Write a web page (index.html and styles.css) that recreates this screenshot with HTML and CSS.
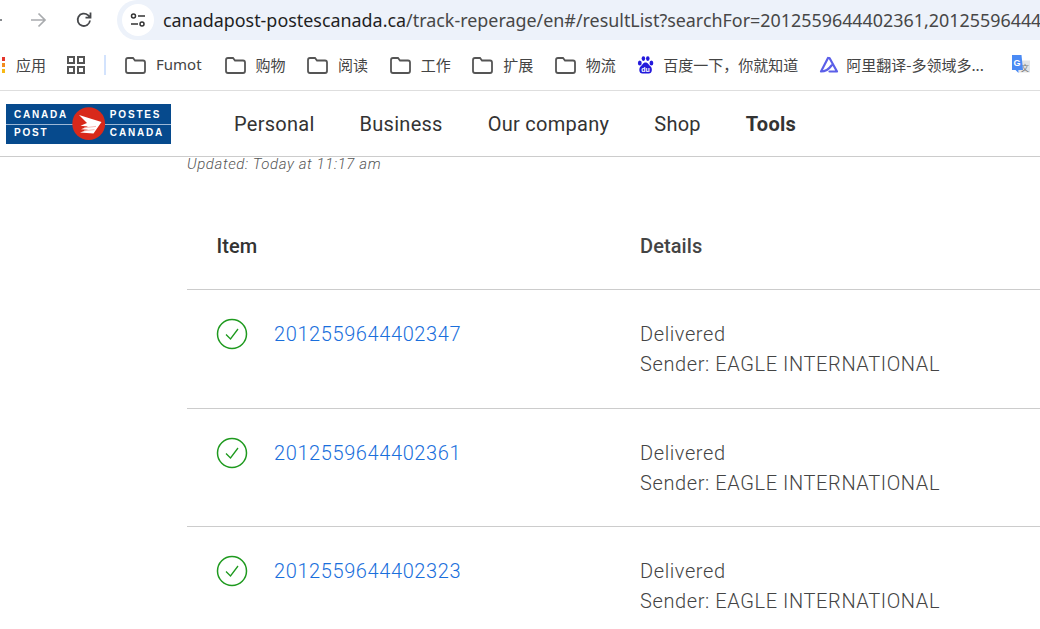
FILE: index.html
```html
<!DOCTYPE html>
<html lang="en">
<head>
    <meta charset="UTF-8">
    <meta name="viewport" content="width=device-width, initial-scale=1.0">
    <title>Canada Post - Track</title>
    <link rel="stylesheet" href="styles.css">
</head>
<body>
    <div class="toolbar">
        <div class="nav-btns">
            <svg class="back" width="8" height="20" viewBox="0 0 8 20"><path d="M-6 10H2" fill="none" stroke="#5f6368" stroke-width="1.6"/></svg>
            <svg class="forward" width="20" height="20" viewBox="0 0 20 20"><path d="M3 10H17M10.5 3.5L17 10L10.5 16.5" fill="none" stroke="#a9abae" stroke-width="1.7"/></svg>
            <svg class="reload" width="20" height="20" viewBox="0 0 20 20"><path d="M16 10.5A6.2 6.2 0 1 1 14 5.2L16.3 7.4M16.5 2.6V7.6H11.5" fill="none" stroke="#46484b" stroke-width="1.8"/></svg>
        </div>
        <div class="address">
            <span class="site-btn">
                <svg width="16" height="14" viewBox="0 0 16 14"><circle cx="3.5" cy="3" r="2" fill="none" stroke="#333" stroke-width="1.5"/><path d="M8 3H15M1 11H8" stroke="#333" stroke-width="1.5"/><circle cx="12" cy="11" r="2" fill="none" stroke="#333" stroke-width="1.5"/></svg>
            </span>
            <span class="url">canadapost-postescanada.ca<span class="url-rest">/track-reperage/en#/resultList?searchFor=2012559644402361,20125596444023</span></span>
        </div>
    </div>

    <div class="bookmarks">
        <span class="apps-dots"><i class="red"></i><i class="orange"></i><i class="yellow"></i></span>
        <span class="bm-label apps-label">应用</span>
        <svg class="grid-icon" width="18" height="18" viewBox="0 0 18 18"><g fill="none" stroke="#555" stroke-width="2"><rect x="1" y="1" width="6" height="6"/><rect x="11" y="1" width="6" height="6"/><rect x="1" y="11" width="6" height="6"/><rect x="11" y="11" width="6" height="6"/></g></svg>
        <span class="bm-sep"></span>
        <span class="bm bm-fumot"><svg class="folder" width="21" height="17" viewBox="0 0 21 17"><path d="M1 3.2Q1 1 3 1H8L10 3.5H18Q20 3.5 20 5.5V14Q20 16 18 16H3Q1 16 1 14Z" fill="none" stroke="#555" stroke-width="1.8"/></svg><span class="bm-label">Fumot</span></span>
        <span class="bm"><svg class="folder" width="21" height="17" viewBox="0 0 21 17"><path d="M1 3.2Q1 1 3 1H8L10 3.5H18Q20 3.5 20 5.5V14Q20 16 18 16H3Q1 16 1 14Z" fill="none" stroke="#555" stroke-width="1.8"/></svg><span class="bm-label">购物</span></span>
        <span class="bm"><svg class="folder" width="21" height="17" viewBox="0 0 21 17"><path d="M1 3.2Q1 1 3 1H8L10 3.5H18Q20 3.5 20 5.5V14Q20 16 18 16H3Q1 16 1 14Z" fill="none" stroke="#555" stroke-width="1.8"/></svg><span class="bm-label">阅读</span></span>
        <span class="bm"><svg class="folder" width="21" height="17" viewBox="0 0 21 17"><path d="M1 3.2Q1 1 3 1H8L10 3.5H18Q20 3.5 20 5.5V14Q20 16 18 16H3Q1 16 1 14Z" fill="none" stroke="#555" stroke-width="1.8"/></svg><span class="bm-label">工作</span></span>
        <span class="bm"><svg class="folder" width="21" height="17" viewBox="0 0 21 17"><path d="M1 3.2Q1 1 3 1H8L10 3.5H18Q20 3.5 20 5.5V14Q20 16 18 16H3Q1 16 1 14Z" fill="none" stroke="#555" stroke-width="1.8"/></svg><span class="bm-label">扩展</span></span>
        <span class="bm"><svg class="folder" width="21" height="17" viewBox="0 0 21 17"><path d="M1 3.2Q1 1 3 1H8L10 3.5H18Q20 3.5 20 5.5V14Q20 16 18 16H3Q1 16 1 14Z" fill="none" stroke="#555" stroke-width="1.8"/></svg><span class="bm-label">物流</span></span>
        <span class="bm bm-baidu"><svg width="17" height="18" viewBox="0 0 17 18"><g fill="#2319dc"><ellipse cx="2.8" cy="7" rx="1.9" ry="2.5"/><ellipse cx="6.4" cy="2.6" rx="1.8" ry="2.4"/><ellipse cx="10.8" cy="2.6" rx="1.8" ry="2.4"/><ellipse cx="14.4" cy="7" rx="1.9" ry="2.5"/><path d="M8.5 6.5C6 6.5 5.5 9 3.8 10.2C1.6 11.8 1.6 17.5 5.5 17.5H11.7C15.6 17.5 15.6 11.8 13.4 10.2C11.7 9 11 6.5 8.5 6.5Z"/></g><text x="8.6" y="15.6" class="du">du</text></svg><span class="bm-label">百度一下，你就知道</span></span>
        <span class="bm bm-ali"><svg width="20" height="18" viewBox="0 0 20 18"><path d="M9 2L2 15.5C6.5 15.5 10 13 12.5 9.5M9 2H10.5L18 15.5H10.5" fill="none" stroke="#5b5fe8" stroke-width="2.2" stroke-linejoin="round" stroke-linecap="round"/></svg><span class="bm-label">阿里翻译-多领域多...</span></span>
        <span class="bm-google"><svg width="19" height="20" viewBox="0 0 19 20"><rect x="8" y="5.5" width="11" height="12" fill="#e3e4e6"/><text x="10" y="15.5" class="wen">文</text><path d="M1 0H10.5L12 15H7.5V18L4.5 15H1Z" fill="#4a8af4"/><text x="2.6" y="11" class="goog">G</text></svg></span>
    </div>

    <header class="site-header">
        <div class="logo">
            <div class="logo-col">
                <span class="logo-word">CANADA</span>
                <span class="logo-word">POST</span>
            </div>
            <svg class="logo-mark" width="34" height="34" viewBox="0 0 34 34"><circle cx="16.7" cy="16.7" r="16.4" fill="#d8291a"/><path d="M7 8L29.5 15L21.5 26.5L8 25.5L16 22.8L9 22.3L16 19.6L8.5 18.8L15 16Z" fill="#fff"/><path d="M12 20.8L24 19.4M12 23.8L22.5 22.6" stroke="#f1a79f" stroke-width=".8"/></svg>
            <div class="logo-col logo-col-right">
                <span class="logo-word">POSTES</span>
                <span class="logo-word">CANADA</span>
            </div>
        </div>
        <nav class="main-nav">
            <a>Personal</a>
            <a>Business</a>
            <a>Our company</a>
            <a>Shop</a>
            <a class="active">Tools</a>
        </nav>
    </header>

    <main class="content">
        <p class="updated">Updated: Today at 11:17 am</p>
        <div class="table">
            <div class="row head">
                <div class="col-item">Item</div>
                <div class="col-details">Details</div>
            </div>
            <div class="row">
                <div class="col-item">
                    <svg class="check" width="32" height="32" viewBox="0 0 32 32"><circle cx="16" cy="16" r="14.5" fill="none" stroke="#1f9a1f" stroke-width="1.5"/><path d="M10 16.5L14.5 21L22 11" fill="none" stroke="#1f9a1f" stroke-width="1.3"/></svg>
                    <a class="track-no">2012559644402347</a>
                </div>
                <div class="col-details">Delivered<br>Sender: EAGLE INTERNATIONAL</div>
            </div>
            <div class="row">
                <div class="col-item">
                    <svg class="check" width="32" height="32" viewBox="0 0 32 32"><circle cx="16" cy="16" r="14.5" fill="none" stroke="#1f9a1f" stroke-width="1.5"/><path d="M10 16.5L14.5 21L22 11" fill="none" stroke="#1f9a1f" stroke-width="1.3"/></svg>
                    <a class="track-no">2012559644402361</a>
                </div>
                <div class="col-details">Delivered<br>Sender: EAGLE INTERNATIONAL</div>
            </div>
            <div class="row">
                <div class="col-item">
                    <svg class="check" width="32" height="32" viewBox="0 0 32 32"><circle cx="16" cy="16" r="14.5" fill="none" stroke="#1f9a1f" stroke-width="1.5"/><path d="M10 16.5L14.5 21L22 11" fill="none" stroke="#1f9a1f" stroke-width="1.3"/></svg>
                    <a class="track-no">2012559644402323</a>
                </div>
                <div class="col-details">Delivered<br>Sender: EAGLE INTERNATIONAL</div>
            </div>
        </div>
    </main>
</body>
</html>
```

FILE: styles.css
```css
html, body {
    margin: 0;
    padding: 0;
    height: 629px;
    overflow: hidden;
    background: #fff;
}
body {
    font-family: Roboto, "Noto Sans CJK SC", sans-serif;
    color: #333;
}

/* browser chrome */
.toolbar {
    display: flex;
    height: 40px;
    background: #fff;
}
.nav-btns {
    width: 117px;
    display: flex;
    align-items: center;
    flex-shrink: 0;
}
.back {
    margin-right: 20px;
}
.forward {
    margin-right: 26px;
}
.address {
    flex: 1;
    min-width: 0;
    display: flex;
    align-items: center;
    background: #edf2fa;
    border-radius: 20px 0 0 20px;
    padding-left: 5px;
    overflow: hidden;
}
.site-btn {
    width: 32px;
    height: 32px;
    flex-shrink: 0;
    background: #fff;
    border-radius: 50%;
    display: flex;
    align-items: center;
    justify-content: center;
}
.url {
    margin-left: 9px;
    font-family: "Noto Sans", sans-serif;
    font-size: 17.9px;
    color: #1f1f1f;
    white-space: nowrap;
}
.url-rest {
    color: #474747;
}

.bookmarks {
    display: flex;
    align-items: center;
    height: 50px;
    border-bottom: 1px solid #dedede;
    white-space: nowrap;
    overflow: hidden;
}
.apps-dots {
    display: flex;
    flex-direction: column;
    gap: 2px;
    margin-left: 2px;
    width: 3px;
}
.apps-dots i {
    display: block;
    width: 3px;
    height: 4px;
}
.apps-dots .red { background: #e5352b; }
.apps-dots .orange { background: #f28c1e; }
.apps-dots .yellow { background: #f7b916; }
.bm-label {
    font-family: "Noto Sans CJK SC", sans-serif;
    font-size: 15px;
    color: #444;
    margin-top: -2px;
}
.apps-label {
    margin-left: 11px;
}
.grid-icon {
    margin-left: 21px;
}
.bm-sep {
    width: 2px;
    height: 20px;
    background: #d3e3fd;
    margin-left: 19px;
    margin-right: 19px;
}
.bm {
    display: flex;
    align-items: center;
    margin-right: 21.5px;
}
.folder {
    margin-right: 10px;
}
.bm-fumot {
    margin-right: 23px;
}
.bm-fumot .bm-label {
    font-family: "Noto Sans", sans-serif;
}
.bm-baidu {
    margin-right: 21px;
}
.bm-baidu svg {
    margin-right: 9px;
}
.bm-ali svg {
    margin-right: 7px;
}
.bm-ali {
    margin-right: 26px;
}
.bm-google svg {
    display: block;
    margin-left: 1px;
}
.du {
    font-family: "Liberation Sans", sans-serif;
    font-size: 7px;
    font-weight: bold;
    fill: #fff;
    text-anchor: middle;
}
.wen {
    font-family: "Noto Sans CJK SC", sans-serif;
    font-size: 8px;
    fill: #777;
}
.goog {
    font-family: "Liberation Sans", sans-serif;
    font-size: 9px;
    font-weight: bold;
    fill: #fff;
}

/* site header */
.site-header {
    display: flex;
    align-items: center;
    height: 65px;
    border-bottom: 1px solid #ccc;
    box-sizing: content-box;
}
.logo {
    display: flex;
    align-items: center;
    justify-content: space-between;
    width: 165px;
    height: 40px;
    margin-left: 6px;
    background: #064a8d;
    position: relative;
}
.logo::after {
    content: "";
    position: absolute;
    left: 0;
    right: 0;
    top: 20px;
    height: 1px;
    background: #9db8d6;
}
.logo-col {
    display: flex;
    flex-direction: column;
    gap: 6px;
    padding-left: 8px;
}
.logo-col-right {
    padding-left: 0;
    padding-right: 7px;
}
.logo-word {
    font-family: "Liberation Sans", sans-serif;
    font-size: 10px;
    line-height: 12px;
    font-weight: bold;
    letter-spacing: 1.8px;
    color: #fff;
}
.logo-mark {
    position: absolute;
    left: 66px;
    top: 3.5px;
    z-index: 1;
}
.main-nav {
    display: flex;
    gap: 45px;
    margin-left: 63px;
}
.main-nav a {
    font-size: 20px;
    letter-spacing: 0.27px;
    color: #333;
}
.main-nav .active {
    font-weight: 700;
}

/* results */
.content {
    margin-left: 187px;
}
.updated {
    margin: 0;
    height: 47px;
    line-height: 15px;
    font-size: 15px;
    font-weight: 300;
    font-style: italic;
    letter-spacing: 0.6px;
    color: #555;
}
.row {
    display: grid;
    grid-template-columns: 453px 1fr;
    height: 118.5px;
    box-sizing: border-box;
    border-bottom: 1px solid #ccc;
    padding-top: 29px;
    font-size: 20px;
    line-height: 30px;
    font-weight: 300;
    letter-spacing: 0.6px;
    white-space: nowrap;
}
.row.head {
    height: 86px;
    padding-top: 27px;
    font-weight: 500;
    letter-spacing: 0.1px;
}
.col-item {
    display: flex;
    align-items: flex-start;
    padding-left: 29.5px;
}
.check {
    flex-shrink: 0;
    margin-top: -1px;
    margin-left: -0.5px;
    margin-right: 26px;
}
.track-no {
    color: #1a6fdc;
}
.col-details {
    color: #444;
}
```
